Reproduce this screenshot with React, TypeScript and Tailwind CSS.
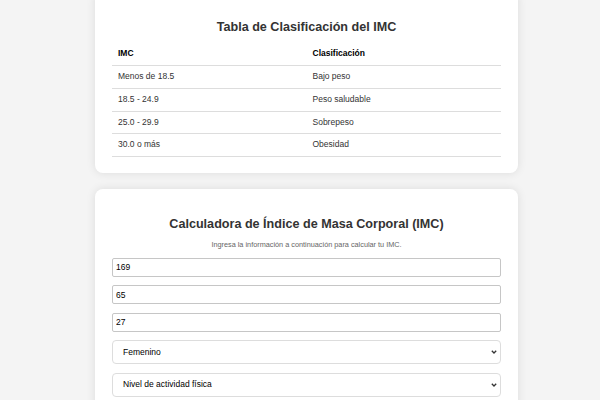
import React from 'react';

const rows = [
  ['Menos de 18.5', 'Bajo peso'],
  ['18.5 - 24.9', 'Peso saludable'],
  ['25.0 - 29.9', 'Sobrepeso'],
  ['30.0 o más', 'Obesidad'],
];

const Chevron: React.FC = () => (
  <svg
    className="pointer-events-none absolute right-[4px] top-1/2 -translate-y-1/2"
    width="6"
    height="4"
    viewBox="0 0 6 4"
  >
    <path d="M0.8 0.8 L3 3 L5.2 0.8" fill="none" stroke="#333" strokeWidth="1.3" />
  </svg>
);

const App: React.FC = () => {
  return (
    <div
      className="min-h-screen bg-[#f4f4f4] overflow-hidden text-[#333]"
      style={{ fontFamily: '"Liberation Sans", Arial, sans-serif' }}
    >
      <div className="ml-[95px] w-[423px] -mt-[8px] flex flex-col gap-[16px]">
        {/* Classification table */}
        <div className="bg-white rounded-[8px] shadow-[0_0_10px_rgba(0,0,0,0.1)] px-[17px] pt-[17px] pb-[16px]">
          <h2 className="mt-[10.5px] mb-[8.5px] text-center text-[12.6px] leading-[14.5px] font-bold text-[#333]">
            Tabla de Clasificación del IMC
          </h2>
          <table className="w-full text-[8.5px] border-collapse">
            <thead>
              <tr className="h-[23px] border-b border-[#ddd]">
                <th className="w-1/2 text-left font-bold px-[6px] text-black">IMC</th>
                <th className="w-1/2 text-left font-bold px-[6px] text-black">Clasificación</th>
              </tr>
            </thead>
            <tbody>
              {rows.map(([imc, cls]) => (
                <tr key={imc} className="h-[22.8px] border-b border-[#ddd]">
                  <td className="px-[6px] pb-[1px]">{imc}</td>
                  <td className="px-[6px] pb-[1px]">{cls}</td>
                </tr>
              ))}
            </tbody>
          </table>
        </div>

        {/* Calculator */}
        <div className="bg-white rounded-[8px] shadow-[0_0_10px_rgba(0,0,0,0.1)] px-[17px] pt-[17px] pb-[17px]">
          <h2 className="mt-[10.5px] mb-[8.5px] text-center text-[12.6px] leading-[14.5px] font-bold text-[#333]">
            Calculadora de Índice de Masa Corporal (IMC)
          </h2>
          <p className="text-center text-[7.3px] leading-[9px] text-[#666]">
            Ingresa la información a continuación para calcular tu IMC.
          </p>
          <div className="mt-[9px] flex flex-col gap-[8.5px]">
            <input
              type="number"
              defaultValue="169"
              className="h-[19px] w-full border border-[#c6c6c6] rounded-[2px] pl-[3px] text-[8.5px] text-black"
            />
            <input
              type="number"
              defaultValue="65"
              className="h-[19px] w-full border border-[#c6c6c6] rounded-[2px] pl-[3px] text-[8.5px] text-black"
            />
            <input
              type="number"
              defaultValue="27"
              className="h-[19px] w-full border border-[#c6c6c6] rounded-[2px] pl-[3px] text-[8.5px] text-black"
            />
            <div className="relative">
              <select
                defaultValue="f"
                className="block appearance-none h-[24px] w-full border border-[#ddd] rounded-[4px] pl-[10px] pr-[12px] text-[8.5px] text-black bg-white"
              >
                <option value="m">Masculino</option>
                <option value="f">Femenino</option>
              </select>
              <Chevron />
            </div>
            <div className="relative">
              <select
                defaultValue=""
                className="block appearance-none h-[24px] w-full border border-[#ddd] rounded-[4px] pl-[10px] pr-[12px] text-[8.5px] text-black bg-white"
              >
                <option value="">Nivel de actividad física</option>
                <option value="1">Sedentario</option>
                <option value="2">Ligero</option>
                <option value="3">Moderado</option>
                <option value="4">Intenso</option>
              </select>
              <Chevron />
            </div>
          </div>
        </div>
      </div>
    </div>
  );
};

export default App;
